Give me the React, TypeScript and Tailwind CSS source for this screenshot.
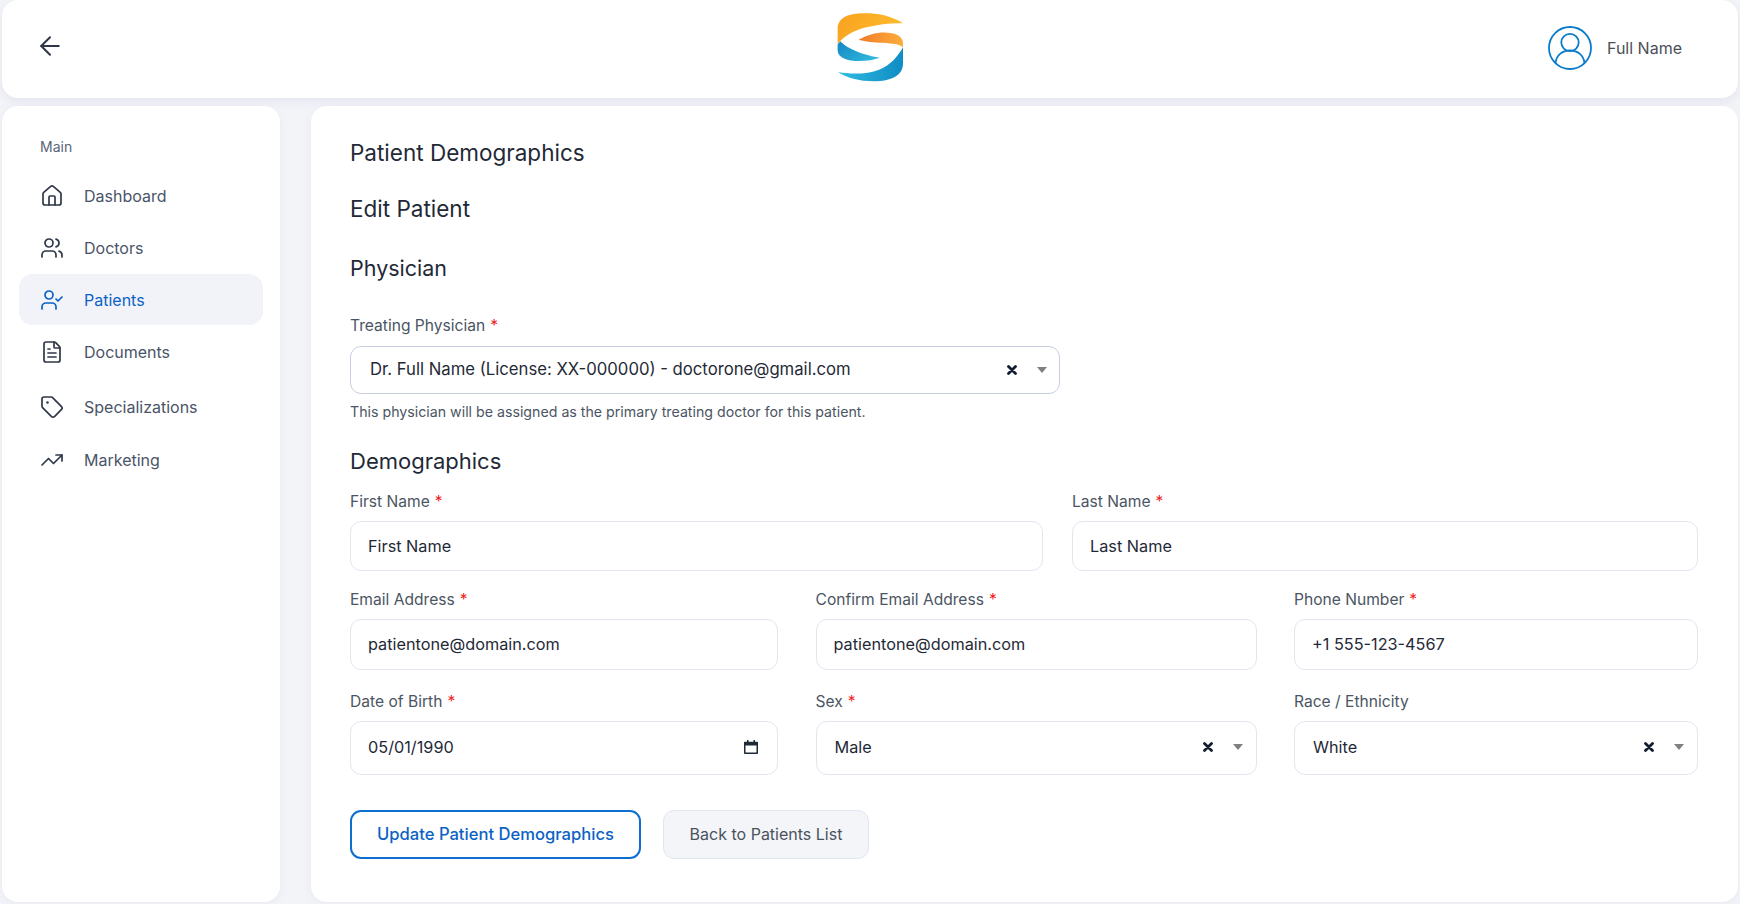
import { ArrowLeft, FileText, House, Tag, TrendingUp, UserCheck, Users } from "lucide-react"

const font = { fontFamily: "Inter, sans-serif" }

const navItems = [
  { label: "Dashboard", icon: House, h: "h-[52px]" },
  { label: "Doctors", icon: Users, h: "h-[52px]" },
  { label: "Patients", icon: UserCheck, h: "h-[51px]", active: true },
  { label: "Documents", icon: FileText, h: "h-[54px]" },
  { label: "Specializations", icon: Tag, h: "h-[55px]" },
  { label: "Marketing", icon: TrendingUp, h: "h-[51px]" },
]

function Logo() {
  return (
    <svg viewBox="170 34 208 214" className="h-[71px] w-[69px]">
      <defs>
        <linearGradient id="o1" x1="0" y1="0" x2="1" y2="0.3">
          <stop offset="0" stopColor="#f9a11f" />
          <stop offset="1" stopColor="#fdbb2d" />
        </linearGradient>
        <linearGradient id="o2" x1="0" y1="0.5" x2="1" y2="0.5">
          <stop offset="0" stopColor="#f27a2a" />
          <stop offset="1" stopColor="#fcae3c" />
        </linearGradient>
        <linearGradient id="b1" x1="0" y1="0" x2="1" y2="0.6">
          <stop offset="0" stopColor="#1486c4" />
          <stop offset="1" stopColor="#2fb6dc" />
        </linearGradient>
        <linearGradient id="b2" x1="0" y1="0.5" x2="1" y2="0.5">
          <stop offset="0" stopColor="#30bde0" />
          <stop offset="1" stopColor="#0f8cc4" />
        </linearGradient>
      </defs>
      <path fill="url(#o1)" d="M372 68C330 40 280 36 245 38C205 40 175 52 175 85L175 132C190 108 222 90 262 80C300 71 340 66 372 68Z" />
      <path fill="url(#b1)" d="M175 132L175 150C175 172 205 182 240 182C265 182 285 178 302 172C270 166 235 156 212 143C198 136 188 128 183 122Z" />
      <path fill="url(#o2)" d="M238 118C262 104 290 96 315 96C350 96 372 108 372 128L372 140C360 130 330 128 300 127C275 126 255 123 238 118Z" />
      <path fill="url(#b2)" d="M176 215C215 222 265 222 300 208C335 194 358 165 372 140L372 190C372 225 335 243 285 243C240 243 200 232 176 215Z" />
    </svg>
  )
}

function Avatar() {
  return (
    <svg viewBox="0 0 44 44" fill="none" stroke="#0b7cc9" strokeWidth="1.8" className="h-[44px] w-[44px]">
      <circle cx="22" cy="22" r="21" />
      <circle cx="22" cy="16.5" r="8.7" />
      <path d="M7.5 37c.8-7.5 6.6-12.5 14.5-12.5S35.700 29.500 36.500 37" />
    </svg>
  )
}

function ClearIcon() {
  return (
    <svg viewBox="0 0 10 10" className="h-[10px] w-[10px]" stroke="#111c30" strokeWidth="2.8" strokeLinecap="round">
      <path d="M1.500 1.500l7 7M8.500 1.500l-7 7" />
    </svg>
  )
}

function Caret() {
  return (
    <svg viewBox="0 0 10 6" className="h-[6px] w-[10px]" fill="#808080">
      <path d="M0 0h10L5 6z" />
    </svg>
  )
}

function CalendarIcon() {
  return (
    <svg viewBox="0 0 16 16" className="-mr-[1px] h-[16px] w-[16px]" fill="none">
      <path stroke="#1f2937" strokeWidth="1.500" d="M1.750 3.500h12.500v10.750H1.750z" strokeLinejoin="round" />
      <path fill="#1f2937" d="M1.500 3h13v3.500h-13zM4 1h1.500v2.500H4zM10.500 1H12v2.500h-1.500z" />
    </svg>
  )
}

function Label({ text, required = true }: { text: string; required?: boolean }) {
  return (
    <div className="mb-[9px] h-[20px] text-[15.600px] leading-[20px] text-[#4b5563]">
      {text}
      {required && <span className="ml-[5px] text-[#ef1c1c]">*</span>}
    </div>
  )
}

function Field({ label, value, required = true, h = "h-[50px]", pl = "pl-[17px]", children }: { label: string; value: string; required?: boolean; h?: string; pl?: string; children?: React.ReactNode }) {
  return (
    <div>
      <Label text={label} required={required} />
      <div className={`flex ${h} items-center rounded-[11px] border-[1.5px] border-[#e1e6f0] bg-white ${pl} pr-[19px] text-[16.250px] text-[#1f2937]`}>
        <span className="flex-1">{value}</span>
        {children}
      </div>
    </div>
  )
}

function SelectControls() {
  return (
    <div className="-mr-[6px] flex items-center gap-[20px]">
      <ClearIcon />
      <Caret />
    </div>
  )
}

export default function App() {
  return (
    <div style={font} className="flex h-[904px] w-full flex-col gap-[8px] overflow-hidden bg-[#f3f4f8] pb-[2px] pl-[2px] pr-[2px]">
      <header className="grid h-[98px] shrink-0 grid-cols-[1fr_auto_1fr] items-center rounded-[16px] bg-white pb-[3px] pl-[56px] pr-[56px] shadow-[0_3px_8px_rgba(180,188,210,0.25)]">
        <ArrowLeft size={30} strokeWidth={1.600} className="-ml-[23px] -mt-[4px] text-[#2d3748]" />
        <Logo />
        <div className="flex items-center justify-end gap-[15px] text-[16px] text-[#4b4f57]">
          <Avatar />
          <span>Full Name</span>
        </div>
      </header>

      <div className="flex flex-1 gap-[31px]">
        <aside className="w-[278px] shrink-0 rounded-[16px] bg-white px-[17px] pt-[32px] shadow-[0_2px_8px_rgba(180,188,210,0.15)]">
          <div className="mb-[14px] pl-[21px] text-[14px] leading-[18px] text-[#5a6478]">Main</div>
          <nav>
            {navItems.map((item) => (
              <div
                key={item.label}
                className={`flex ${item.h} items-center gap-[20px] rounded-[14px] pl-[21px] text-[16px] ${item.active ? "bg-[#f1f3f9] text-[#0b62c4]" : "text-[#4a5468]"}`}
              >
                <item.icon size={24} strokeWidth={1.7} className={item.active ? "text-[#0b62c4]" : "text-[#2f3848]"} />
                <span>{item.label}</span>
              </div>
            ))}
          </nav>
        </aside>

        <main className="flex-1 rounded-[16px] bg-white pl-[39px] pr-[40px] pt-[31px] shadow-[0_2px_8px_rgba(180,188,210,0.15)]">
          <h1 className="h-[32px] text-[22.500px] font-normal leading-[32px] text-[#1f2937]">Patient Demographics</h1>
          <h2 className="mt-[24px] h-[32px] text-[22.500px] leading-[32px] text-[#1f2937]">Edit Patient</h2>
          <h2 className="mt-[27px] h-[32px] text-[21.500px] leading-[32px] text-[#1f2937]">Physician</h2>

          <div className="mt-[32px] w-[710px]">
            <Label text="Treating Physician" />
            <div className="mt-[10px] flex h-[48px] items-center rounded-[11px] border-[1.5px] border-[#c9cfe2] bg-white pl-[19px] pr-[12px] text-[16.700px] text-[#1f2937]">
              <span className="flex-1">Dr. Full Name (License: XX-000000) - doctorone@gmail.com</span>
              <div className="flex items-center gap-[20px]">
                <ClearIcon />
                <Caret />
              </div>
            </div>
            <p className="mt-[9px] text-[14.200px] leading-[18px] text-[#4b5563]">
              This physician will be assigned as the primary treating doctor for this patient.
            </p>
          </div>

          <h2 className="mt-[24px] h-[32px] text-[22px] leading-[32px] text-[#1f2937]">Demographics</h2>

          <div className="mt-[15px] grid grid-cols-[693px_1fr] gap-x-[29px]">
            <Field label="First Name" value="First Name" />
            <Field label="Last Name" value="Last Name" />
          </div>

          <div className="mt-[19px] grid grid-cols-[428px_441px_1fr] gap-x-[37.500px]">
            <Field label="Email Address" value="patientone@domain.com" h="h-[51px]" />
            <Field label="Confirm Email Address" value="patientone@domain.com" h="h-[51px]" />
            <Field label="Phone Number" value="+1 555-123-4567" h="h-[51px]" />
          </div>

          <div className="mt-[22px] grid grid-cols-[428px_441px_1fr] gap-x-[37.500px]">
            <Field label="Date of Birth" value="05/01/1990" h="h-[54px] pb-[2px]">
              <CalendarIcon />
            </Field>
            <Field label="Sex" value="Male" h="h-[54px] pb-[2px]" pl="pl-[18px]">
              <SelectControls />
            </Field>
            <Field label="Race / Ethnicity" value="White" required={false} h="h-[54px] pb-[2px]" pl="pl-[18px]">
              <SelectControls />
            </Field>
          </div>

          <div className="mt-[35px] flex gap-[22px]">
            <button className="h-[49px] w-[291px] rounded-[11px] border-2 border-[#0f6fd0] bg-white text-[16.600px] font-medium text-[#0b62c4]">
              Update Patient Demographics
            </button>
            <button className="h-[49px] w-[206px] rounded-[11px] border-[1.5px] border-[#e1e6f0] bg-[#f4f5f8] pb-[2px] text-[16px] text-[#4a5260]">
              Back to Patients List
            </button>
          </div>
        </main>
      </div>
    </div>
  )
}
